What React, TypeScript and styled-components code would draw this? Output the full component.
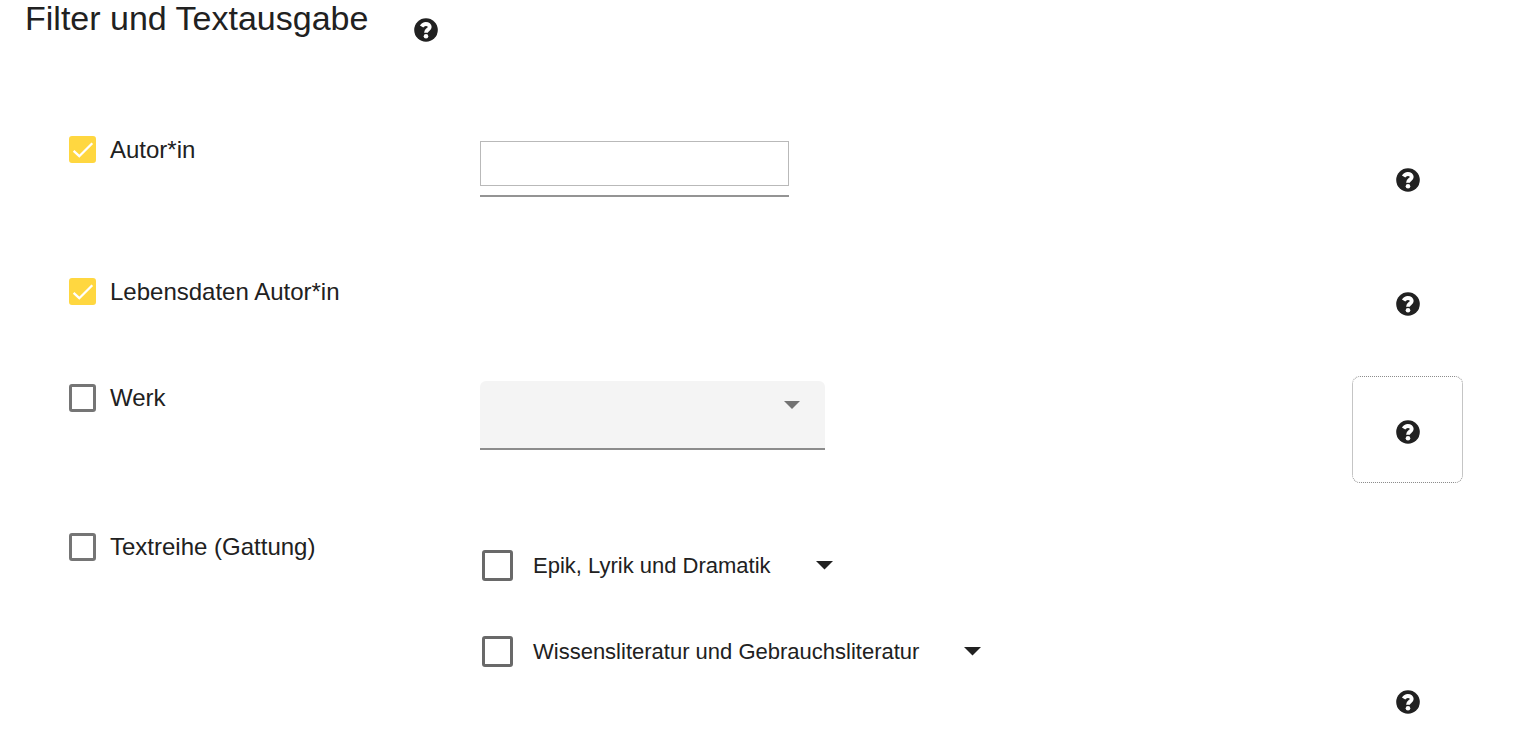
import React, { useId, useState } from 'react';
import styled, { createGlobalStyle } from 'styled-components';

const GlobalStyle = createGlobalStyle`
  *, *::before, *::after { box-sizing: border-box; }
  body {
    margin: 0;
    background: #fff;
    color: #212121;
    font-family: "Liberation Sans", Arial, sans-serif;
  }
`;

const Page = styled.main`
  height: 100vh;
  overflow-y: auto;
  scrollbar-width: none;
`;

const Header = styled.header`
  display: flex;
  align-items: flex-start;
  gap: 46px;
  height: 124px;
  padding-left: 25px;
`;

const Title = styled.h1`
  margin: 0;
  font-size: 34px;
  font-weight: 400;
  line-height: 36px;
`;

const TitleHelp = styled.button`
  display: flex;
  margin: 18px 0 0;
  padding: 0;
  border: 0;
  background: none;
  color: inherit;
`;

const Row = styled.section<{ $gap?: number }>`
  display: grid;
  grid-template-columns: 411px 1fr 111px;
  align-items: start;
  margin-bottom: ${(p) => p.$gap ?? 0}px;
  padding: 0 69px;
`;

const Field = styled.div<{ $top: number }>`
  padding-top: ${(p) => p.$top}px;
`;

const HelpButton = styled.button<{ $outlined?: boolean }>`
  display: flex;
  grid-column: 3;
  align-items: center;
  justify-content: center;
  align-self: end;
  width: 111px;
  height: 107px;
  padding: 4px 0 0;
  border: 1px dotted ${(p) => (p.$outlined ? '#8c8c8c' : 'transparent')};
  border-radius: 8px;
  background: none;
  color: inherit;
`;

const CheckLine = styled.div<{ $size: 'regular' | 'large' }>`
  display: flex;
  align-items: ${(p) => (p.$size === 'large' ? 'center' : 'flex-start')};
  gap: ${(p) => (p.$size === 'large' ? 20 : 14)}px;
  font-size: ${(p) => (p.$size === 'large' ? 22 : 24)}px;
  line-height: 28px;
`;

const CheckFrame = styled.span`
  position: relative;
  display: flex;
`;

const CheckInput = styled.input<{ $size: 'regular' | 'large' }>`
  appearance: none;
  width: ${(p) => (p.$size === 'large' ? 31 : 27)}px;
  height: ${(p) => (p.$size === 'large' ? 31 : 28)}px;
  margin: 0;
  border: 3px solid ${(p) => (p.$size === 'large' ? '#696969' : '#757575')};
  border-radius: 3px;
  background: #fff;

  &:checked {
    height: 27px;
    border-color: #ffd740;
    background: #ffd740;
  }
`;

const CheckMark = styled.svg`
  position: absolute;
  inset: 0;
  width: 100%;
  height: 100%;
  pointer-events: none;
`;

const TextInput = styled.input`
  display: block;
  width: 309px;
  height: 45px;
  padding: 4px 8px;
  border: 1px solid #b9b9b9;
  font: inherit;
  font-size: 24px;
`;

const InputUnderline = styled.div`
  width: 309px;
  padding-bottom: 9px;
  border-bottom: 2px solid #949494;
`;

const SelectFrame = styled.div`
  position: relative;
  width: 345px;
`;

const Select = styled.select`
  display: block;
  appearance: none;
  width: 100%;
  height: 69px;
  padding: 0 48px 0 20px;
  border: 0;
  border-bottom: 2px solid #8c8c8c;
  border-radius: 6px 6px 0 0;
  background: #f4f4f4;
  color: inherit;
  font: inherit;
  font-size: 24px;
`;

const SelectArrow = styled.svg`
  position: absolute;
  top: 20px;
  right: 25px;
  pointer-events: none;
`;

const Tree = styled.ul`
  display: grid;
  gap: 55px;
  margin: 0;
  padding: 0 0 86px 2px;
  list-style: none;
`;

const TreeItem = styled.li`
  display: flex;
  align-items: center;
  gap: 45px;
`;

const ExpandButton = styled.button`
  display: flex;
  padding: 0;
  border: 0;
  background: none;
  color: inherit;
`;

type CheckProps = { label: string; size?: 'regular' | 'large'; initial?: boolean };

function Check({ label, size = 'regular', initial = false }: CheckProps) {
  const id = useId();
  const [checked, setChecked] = useState(initial);
  return (
    <CheckLine $size={size}>
      <CheckFrame>
        <CheckInput
          id={id}
          type="checkbox"
          $size={size}
          checked={checked}
          onChange={(e) => setChecked(e.target.checked)}
        />
        {checked && (
          <CheckMark viewBox="0 0 27 27" aria-hidden="true">
            <path d="M4.6 14.8 10.3 20.2 23.3 7.2" fill="none" stroke="#fff" strokeWidth="2.3" />
          </CheckMark>
        )}
      </CheckFrame>
      <label htmlFor={id}>{label}</label>
    </CheckLine>
  );
}

function Caret() {
  return (
    <svg width="17" height="9" viewBox="0 0 17 9" aria-hidden="true">
      <path d="M0 0H17L8.5 8.5Z" fill="currentColor" />
    </svg>
  );
}

function HelpIcon() {
  return (
    <svg width="24" height="24" viewBox="0 0 24 24" aria-hidden="true">
      <circle cx="12" cy="12" r="11.8" fill="currentColor" />
      <path
        d="M7.6 8.6Q9.2 6 11.8 6C14.2 6 15.7 7.3 15.7 9C15.7 11.7 12 11.6 12 14.7"
        fill="none"
        stroke="#fff"
        strokeWidth="3.9"
      />
      <circle cx="12" cy="18.2" r="2.3" fill="#fff" />
    </svg>
  );
}

function Help({ topic, outlined }: { topic: string; outlined?: boolean }) {
  return (
    <HelpButton type="button" aria-label={`Hilfe: ${topic}`} $outlined={outlined}>
      <HelpIcon />
    </HelpButton>
  );
}

export default function App() {
  return (
    <>
      <GlobalStyle />
      <Page>
        <Header>
          <Title>Filter und Textausgabe</Title>
          <TitleHelp type="button" aria-label="Hilfe: Filter und Textausgabe">
            <HelpIcon />
          </TitleHelp>
        </Header>

        <Row $gap={17}>
          <Field $top={12}>
            <Check label="Autor*in" initial />
          </Field>
          <Field $top={17}>
            <InputUnderline>
              <TextInput type="text" aria-label="Autor*in" />
            </InputUnderline>
          </Field>
          <Help topic="Autor*in" />
        </Row>

        <Row $gap={21}>
          <Field $top={30}>
            <Check label="Lebensdaten Autor*in" initial />
          </Field>
          <Help topic="Lebensdaten Autor*in" />
        </Row>

        <Row $gap={42}>
          <Field $top={8}>
            <Check label="Werk" />
          </Field>
          <Field $top={5}>
            <SelectFrame>
              <Select aria-label="Werk" defaultValue="">
                <option value="" />
              </Select>
              <SelectArrow width="16" height="8" viewBox="0 0 16 8" aria-hidden="true">
                <path d="M0 0H16L8 8Z" fill="#737373" />
              </SelectArrow>
            </SelectFrame>
          </Field>
          <Help topic="Werk" outlined />
        </Row>

        <Row>
          <Field $top={8}>
            <Check label="Textreihe (Gattung)" />
          </Field>
          <Field $top={25}>
            <Tree>
              {['Epik, Lyrik und Dramatik', 'Wissensliteratur und Gebrauchsliteratur'].map((name) => (
                <TreeItem key={name}>
                  <Check label={name} size="large" />
                  <ExpandButton type="button" aria-label={`${name} aufklappen`}>
                    <Caret />
                  </ExpandButton>
                </TreeItem>
              ))}
            </Tree>
          </Field>
          <Help topic="Textreihe (Gattung)" />
        </Row>
      </Page>
    </>
  );
}
